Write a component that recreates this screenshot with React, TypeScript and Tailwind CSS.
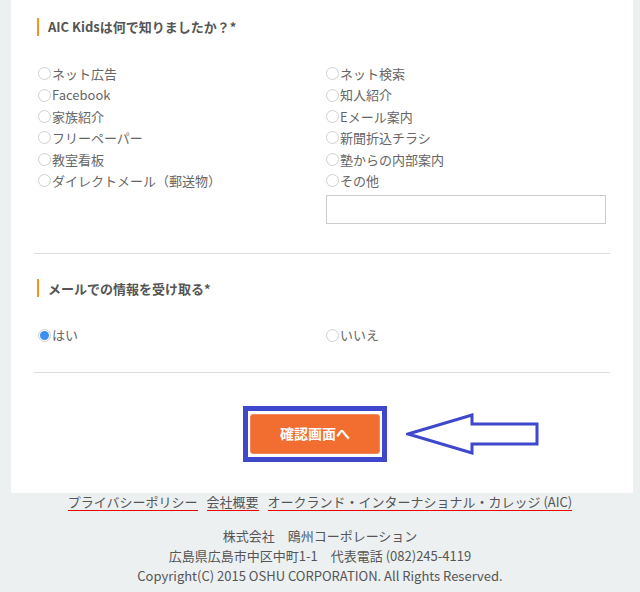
const leftOptions = ["ネット広告", "Facebook", "家族紹介", "フリーペーパー", "教室看板", "ダイレクトメール（郵送物）"];
const rightOptions = ["ネット検索", "知人紹介", "Eメール案内", "新聞折込チラシ", "塾からの内部案内", "その他"];

const font = "font-['Noto_Sans_CJK_JP','Noto_Sans',sans-serif]";

const Radio = ({ label, checked }: { label: string; checked?: boolean }) => (
  <label className="flex items-center h-[21.4px] text-[13px] text-[#666]">
    <span className="w-[13px] h-[13px] mr-[1px] rounded-full border border-[#d0d0d0] bg-white flex items-center justify-center shrink-0">
      {checked && <span className="w-[9px] h-[9px] rounded-full bg-[#3d8ff0]"></span>}
    </span>
    <span>{label}</span>
  </label>
);

const Heading = ({ children }: { children: React.ReactNode }) => (
  <div className="flex items-center ml-[3px] h-[18px]">
    <span className="w-[2px] h-[18px] bg-[#f7931e]"></span>
    <h3 className="ml-[9px] text-[13px] font-bold text-[#555]">{children}</h3>
  </div>
);

const footerLinks = ["プライバシーポリシー", "会社概要", "オークランド・インターナショナル・カレッジ (AIC)"];

export default function App() {
  return (
    <div className={`w-[640px] h-[592px] overflow-hidden bg-[#ecf0f1] ${font}`}>
      {/* form panel */}
      <div className="ml-[11px] w-[622px] h-[493px] bg-white px-[23px] pt-[18px]">
        <Heading>AIC Kidsは何で知りましたか？*</Heading>

        <div className="grid grid-cols-2 mt-[27px]">
          <div className="pl-[4px]">
            {leftOptions.map((o) => (
              <Radio key={o} label={o} />
            ))}
          </div>
          <div className="pl-[4px] pr-[4px]">
            {rightOptions.map((o) => (
              <Radio key={o} label={o} />
            ))}
            <input className="mt-[4px] w-full h-[29px] border border-[#ccc] outline-none" />
          </div>
        </div>

        <div className="mt-[29px] border-t border-[#ddd]"></div>

        <div className="mt-[25px]">
          <Heading>メールでの情報を受け取る*</Heading>
        </div>
        <div className="grid grid-cols-2 mt-[27px]">
          <div className="pl-[4px]">
            <Radio label="はい" checked />
          </div>
          <div className="pl-[4px]">
            <Radio label="いいえ" />
          </div>
        </div>

        <div className="mt-[26px] border-t border-[#ddd]"></div>

        {/* submit */}
        <div className="flex items-center mt-[33px] ml-[209px]">
          <div className="border-[5px] border-[#3f48cc] px-[2px] py-[3px]">
            <button className="w-[130px] h-[40px] rounded-[3px] bg-[#f26e30] border border-[#f08a5c] text-white text-[14px] font-bold">
              確認画面へ
            </button>
          </div>
          <svg width="134" height="42" viewBox="0 0 134 42" className="ml-[19px]">
            <polygon
              points="2,21 66,2 66,11 131,11 131,31 66,31 66,40"
              fill="none"
              stroke="#3f48cc"
              strokeWidth="3"
              strokeLinejoin="miter"
            />
          </svg>
        </div>
      </div>

      {/* footer */}
      <div className="text-center text-[13px] text-[#555]">
        <div className="flex justify-center gap-[9px] leading-[17px]">
          {footerLinks.map((l) => (
            <a key={l} className="border-b border-[#e60000] pb-[0px]">
              {l}
            </a>
          ))}
        </div>
        <div className="mt-[15px] leading-[20px]">
          <p>株式会社　鴎州コーポレーション</p>
          <p>広島県広島市中区中町1-1　代表電話 (082)245-4119</p>
          <p>Copyright(C) 2015 OSHU CORPORATION. All Rights Reserved.</p>
        </div>
      </div>
    </div>
  );
}
